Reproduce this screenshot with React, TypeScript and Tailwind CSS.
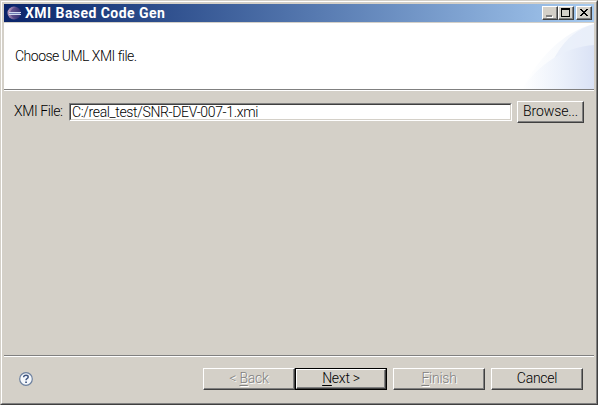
import type { ReactNode } from "react";

const raised =
  "border border-t-white border-l-white border-r-[#404040] border-b-[#404040] shadow-[inset_-1px_-1px_0_#808080] bg-[#d4d0c8]";

function CaptionButton({ label, children }: { label: string; children: ReactNode }) {
  return (
    <button aria-label={label} className={`h-3.5 w-4 shrink-0 ${raised}`}>
      <svg width="14" height="12" viewBox="0 0 14 12" shapeRendering="crispEdges" className="block">
        {children}
      </svg>
    </button>
  );
}

function WizardButton({
  children,
  disabled = false,
  primary = false,
}: {
  children: ReactNode;
  disabled?: boolean;
  primary?: boolean;
}) {
  return (
    <button
      disabled={disabled}
      className={`h-[22px] w-[92px] shrink-0 tracking-[-0.25px] ${primary ? "border border-black" : ""}`}
    >
      <span className={`flex h-full w-full items-center justify-center pb-[2px] ${raised}`}>
        <span
          className={`whitespace-pre ${disabled ? "text-[#808080] [text-shadow:1px_1px_0_#fff]" : "text-black"}`}
        >
          {children}
        </span>
      </span>
    </button>
  );
}

function Key({ children }: { children: string }) {
  return <span className="underline decoration-1 underline-offset-2">{children}</span>;
}

export default function App() {
  return (
    <div className="flex h-[405px] w-[598px] border border-t-[#d4d0c8] border-l-[#d4d0c8] border-r-[#404040] border-b-[#404040] bg-[#d4d0c8] font-['Roboto','Noto_Sans_CJK_KR',sans-serif] text-[14px] leading-4 font-[350] text-black">
      <div className="flex w-full flex-col border border-t-white border-l-white border-r-[#808080] border-b-[#808080] pt-[2px] pr-[2px] pl-[2px]">
        <header className="flex h-[18px] shrink-0 items-center bg-linear-to-r from-[#0a246a] to-[#a6caf0] pr-[2px] pl-[3px]">
          <svg width="14" height="14" viewBox="0 0 14 14" className="mr-1 shrink-0">
            <defs>
              <linearGradient id="orb" x1="0" x2="1" y1="0" y2="0.2">
                <stop offset="0" stopColor="#d3b3c8" />
                <stop offset="0.35" stopColor="#8d76a8" />
                <stop offset="1" stopColor="#353377" />
              </linearGradient>
            </defs>
            <circle cx="7" cy="7" r="6.5" fill="url(#orb)" />
            <path d="M10 1Q4 2 3 7Q4 12 10 13A6.5 6.5 0 0 0 10 1" fill="#3d3678" opacity=".5" />
            <path d="M2 6.5h12M2 8.5h12" stroke="#cfd9ef" />
            <path d="M3 7.5h10" stroke="#6e7cb2" />
          </svg>
          <h1 className="text-[14px] leading-4 font-bold tracking-[0.45px] whitespace-nowrap text-white">
            XMI Based Code Gen
          </h1>
          <div className="ml-auto flex">
            <CaptionButton label="Minimize">
              <path d="M4 9h6v2h-6z" fill="#fff" />
              <path d="M3 8h6v2h-6z" fill="#808080" />
            </CaptionButton>
            <CaptionButton label="Maximize">
              <path d="M2 1h9v9h-9zM3 3v6h7v-6z" fill="#000" fillRule="evenodd" />
            </CaptionButton>
            <span className="w-[2px]" />
            <CaptionButton label="Close">
              <path
                d="M3 2h2v1h1v1h2v-1h1v-1h2v1h-1v1h-1v1h-1v1h1v1h1v1h1v1h-2v-1h-1v-1h-2v1h-1v1h-2v-1h1v-1h1v-1h1v-1h-1v-1h-1v-1h-1z"
                fill="#000"
              />
            </CaptionButton>
          </div>
        </header>

        <section className="mt-px flex h-[66px] shrink-0 justify-between bg-white">
          <p className="mt-[25px] ml-[11px] tracking-[-0.5px] whitespace-nowrap">Choose UML XMI file.</p>
          <svg width="78" height="66" viewBox="0 0 78 66" className="shrink-0">
            <defs>
              <linearGradient id="outer" x1="0" x2="1" y1="0" y2="0">
                <stop offset="0" stopColor="#fff" />
                <stop offset="0.5" stopColor="#f8fafd" />
                <stop offset="1" stopColor="#eef2fb" />
              </linearGradient>
              <linearGradient id="inner" x1="0" x2="1" y1="0" y2="0">
                <stop offset="0" stopColor="#fff" />
                <stop offset="0.5" stopColor="#edf2fb" />
                <stop offset="1" stopColor="#dae2f5" />
              </linearGradient>
            </defs>
            <path d="M6 66C22 36 46 9 78 1V66Z" fill="url(#outer)" />
            <path d="M36 40Q50 9 78 1V22Q56 26 36 40" fill="#e7edf9" opacity=".8" />
            <path d="M6 66C22 42 48 24 78 22V66Z" fill="url(#inner)" />
          </svg>
        </section>
        <div className="h-[2px] shrink-0 border-t border-b border-t-[#808080] border-b-white" />

        <main className="flex grow items-start pt-[10px] pl-[10px]">
          <label htmlFor="file" className="mt-[2px] w-[55px] shrink-0 tracking-[-0.4px] whitespace-nowrap">
            XMI File:
          </label>
          <div className="mt-[2px] h-[18px] w-[443px] shrink-0 border border-t-[#808080] border-l-[#808080] border-r-white border-b-white">
            <input
              id="file"
              readOnly
              value="C:/real_test/SNR-DEV-007-1.xmi"
              className="block h-4 w-full border border-t-[#404040] border-l-[#404040] border-r-[#d4d0c8] border-b-[#d4d0c8] bg-white px-px text-[14px] leading-[14px] font-[350] tracking-[-0.35px] outline-none"
            />
          </div>
          <button className={`ml-[5px] flex h-[22px] w-[67px] shrink-0 items-center justify-center pb-[2px] tracking-[-0.1px] ${raised}`}>
            Browse...
          </button>
        </main>

        <div className="h-[2px] shrink-0 border-t border-b border-t-[#808080] border-b-white" />
        <footer className="flex h-[46px] shrink-0 items-start pt-[11px] pr-[11px] pl-[15px]">
          <svg width="14" height="14" viewBox="0 0 14 14" className="mt-1 shrink-0" aria-label="Help">
            <circle cx="7" cy="7" r="6.3" fill="#f5f8fc" stroke="#6d819f" strokeWidth="1.2" />
            <path d="M4.7 5.3V4.7Q5 3.3 7 3.3Q9.2 3.3 9.2 5Q9.2 6 8 6.6Q7 7.1 7 8.3" fill="none" stroke="#3f5580" strokeWidth="1.5" />
            <path d="M6.2 9.4h1.7V11h-1.7z" fill="#3f5580" />
          </svg>
          <div className="ml-auto flex">
            <WizardButton disabled>&lt; <Key>B</Key>ack</WizardButton>
            <WizardButton primary><Key>N</Key>ext &gt;</WizardButton>
            <span className="w-1.5" />
            <WizardButton disabled><Key>F</Key>inish</WizardButton>
            <span className="w-1.5" />
            <WizardButton>Cancel</WizardButton>
          </div>
        </footer>
      </div>
    </div>
  );
}
